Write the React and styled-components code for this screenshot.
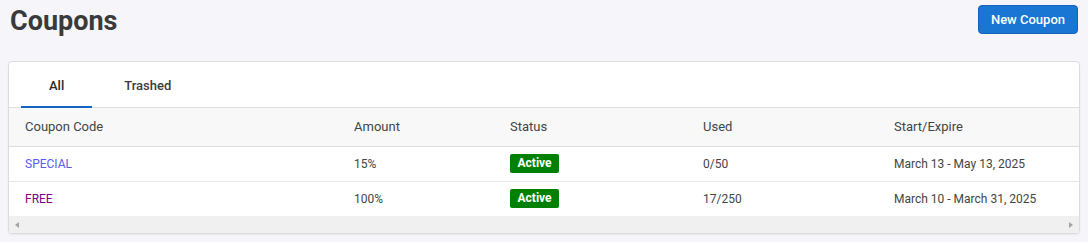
import React from "react";
import styled, { createGlobalStyle } from "styled-components";

const Global = createGlobalStyle`
  html, body { margin: 0; padding: 0; background: #f6f6fa; }
  body { font-family: Roboto, "Liberation Sans", Arial, sans-serif; color: #444; }
  * { box-sizing: border-box; }
`;

const Page = styled.div`
  padding: 5px 8px 8px 8px;
`;

const TopBar = styled.div`
  display: flex;
  justify-content: space-between;
  align-items: flex-start;
  height: 56px;
`;

const Title = styled.h1`
  margin: 1px 0 0 2px;
  font-size: 27px;
  line-height: 30px;
  font-weight: 700;
  color: #3a3a3a;
`;

const PrimaryButton = styled.button`
  height: 29px;
  padding: 0 12px;
  margin-right: 2px;
  border: 1px solid #1560b8;
  border-radius: 4px;
  background: #1976d2;
  color: #fff;
  font-family: Roboto, "Liberation Sans", Arial, sans-serif;
  font-size: 13px;
  font-weight: 500;
  cursor: pointer;
`;

const Card = styled.div`
  background: #fff;
  border: 1px solid #dcdcdc;
  border-radius: 4px;
  box-shadow: 0 1px 2px rgba(0, 0, 0, 0.06);
  overflow: hidden;
`;

const TabBar = styled.div`
  display: flex;
  gap: 4px;
  padding: 0 12px;
  height: 46px;
  border-bottom: 1px solid #dedede;
`;

const Tab = styled.div`
  display: flex;
  align-items: center;
  justify-content: center;
  padding: 0 28px;
  font-size: 13px;
  font-weight: 500;
  color: ${(p) => (p.$active ? "#2a2a2a" : "#3a3a3a")};
  border-bottom: 2px solid ${(p) => (p.$active ? "#1565c0" : "transparent")};
  margin-bottom: -1px;
  padding-top: 2px;
`;

const Table = styled.table`
  width: 100%;
  border-collapse: collapse;
  table-layout: fixed;
`;

const HeadCell = styled.th`
  text-align: left;
  font-weight: 400;
  font-size: 13px;
  color: #444;
  background: #f8f8f8;
  height: 38px;
  padding: 0 0 0 16px;
  border-bottom: 1px solid #dedede;
`;

const Row = styled.tr`
  & + & td {
    border-top: 1px solid #e6e6e6;
  }
`;

const Cell = styled.td`
  font-size: 12px;
  color: #444;
  height: 35px;
  padding: 0 0 0 16px;
  white-space: nowrap;
`;

const CodeLink = styled.a`
  color: ${(p) => (p.$visited ? "#800080" : "#5a5af0")};
  text-decoration: none;
`;

const Badge = styled.span`
  display: inline-block;
  background: #008000;
  color: #fff;
  font-weight: 700;
  font-size: 12px;
  line-height: 19px;
  padding: 0 7.5px;
  border-radius: 2px;
`;

const ScrollTrack = styled.div`
  display: flex;
  justify-content: space-between;
  align-items: center;
  height: 17px;
  background: #f0f0f0;
  padding: 0 6px;
`;

const Arrow = styled.span`
  width: 0;
  height: 0;
  border-top: 3.5px solid transparent;
  border-bottom: 3.5px solid transparent;
  ${(p) =>
    p.$dir === "left"
      ? "border-right: 4px solid #a3a3a3;"
      : "border-left: 4px solid #a3a3a3;"}
`;

const columns = [
  { label: "Coupon Code", width: 329 },
  { label: "Amount", width: 156 },
  { label: "Status", width: 193 },
  { label: "Used", width: 191 },
  { label: "Start/Expire" },
];

const coupons = [
  { code: "SPECIAL", visited: false, amount: "15%", status: "Active", used: "0/50", dates: "March 13 - May 13, 2025" },
  { code: "FREE", visited: true, amount: "100%", status: "Active", used: "17/250", dates: "March 10 - March 31, 2025" },
];

export default function App() {
  return (
    <Page>
      <Global />
      <TopBar>
        <Title>Coupons</Title>
        <PrimaryButton>New Coupon</PrimaryButton>
      </TopBar>
      <Card>
        <TabBar>
          <Tab $active>All</Tab>
          <Tab>Trashed</Tab>
        </TabBar>
        <Table>
          <colgroup>
            {columns.map((c) => (
              <col key={c.label} style={c.width ? { width: c.width } : undefined} />
            ))}
          </colgroup>
          <thead>
            <tr>
              {columns.map((c) => (
                <HeadCell key={c.label}>{c.label}</HeadCell>
              ))}
            </tr>
          </thead>
          <tbody>
            {coupons.map((c) => (
              <Row key={c.code}>
                <Cell>
                  <CodeLink href="#" $visited={c.visited}>{c.code}</CodeLink>
                </Cell>
                <Cell>{c.amount}</Cell>
                <Cell>
                  <Badge>{c.status}</Badge>
                </Cell>
                <Cell>{c.used}</Cell>
                <Cell>{c.dates}</Cell>
              </Row>
            ))}
          </tbody>
        </Table>
        <ScrollTrack>
          <Arrow $dir="left" />
          <Arrow $dir="right" />
        </ScrollTrack>
      </Card>
    </Page>
  );
}
